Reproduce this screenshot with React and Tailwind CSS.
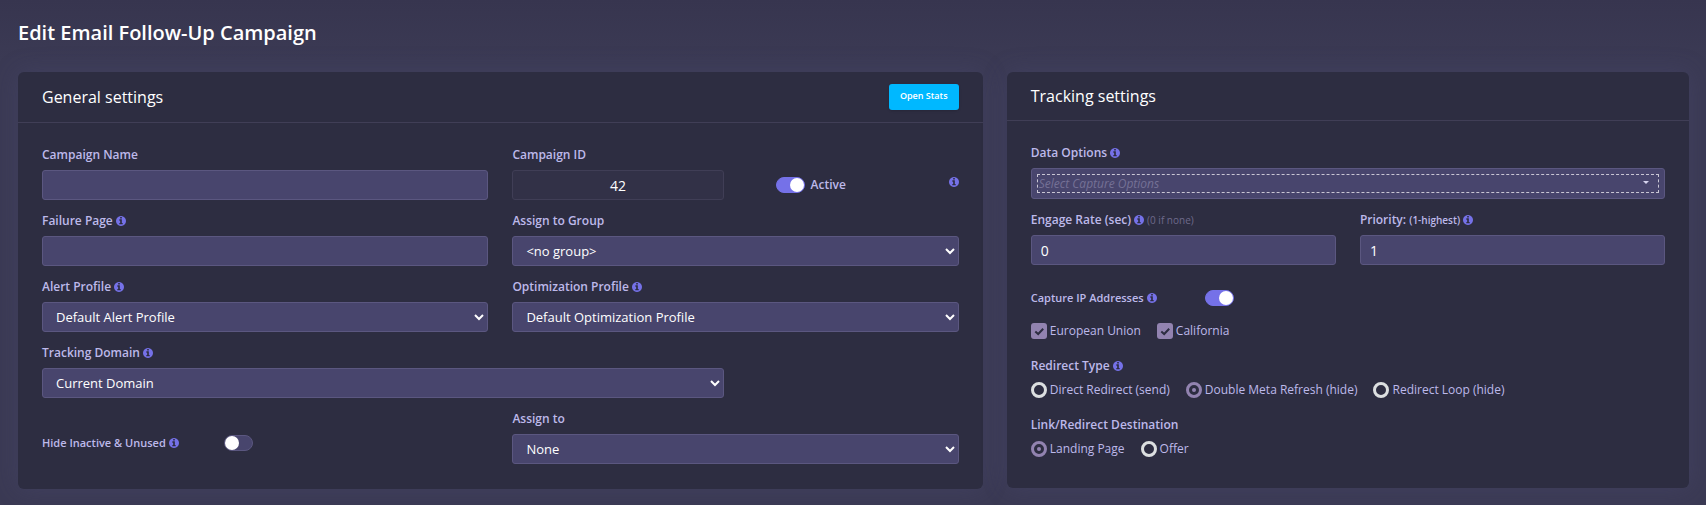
const DEFAULT_PROFILES = {
  alert: "Default Alert Profile",
  optimization: "Default Optimization Profile",
};

export default function App() {
  return (
    <div className="min-h-screen bg-[#3b3a54] bg-linear-to-b from-[#37354f] to-[#3b3a54] to-[60px] pl-[18px] pr-[17px] pb-3 font-['Open_Sans',sans-serif] text-xs text-[#bdb9ea]">
      <h1 className="pt-[17px] pb-[23px] text-xl leading-8 font-semibold text-white">Edit Email Follow-Up Campaign</h1>

      <div className="grid grid-cols-12 items-start gap-6">
        {/* General settings */}
        <Card className="col-span-7" title="General settings" action={<OpenStats />}>
          <div className="grid grid-cols-12 gap-x-6 gap-y-3 pb-[25px]">
            <Field className="col-span-6" id="name" label="Campaign Name">
              <TextInput id="name" />
            </Field>
            <Field className="col-span-3" id="cid" label="Campaign ID">
              <input
                id="cid"
                readOnly
                defaultValue="42"
                className="block h-[30px] w-full rounded-[3px] border border-[#403e56] bg-[#323147] text-center text-sm text-white outline-none"
              />
            </Field>
            <div className="col-span-3 flex items-end justify-between pl-7">
              <div className="flex h-[30px] items-center gap-[6px]">
                <Switch id="active" defaultChecked />
                <label htmlFor="active" className="leading-[18px] font-semibold">Active</label>
              </div>
              <div className="flex h-9 items-center">
                <Info />
              </div>
            </div>

            <Field className="col-span-6" id="failure" label="Failure Page" info>
              <TextInput id="failure" />
            </Field>
            <Field className="col-span-6" id="group" label="Assign to Group">
              <Select id="group" options={["<no group>"]} />
            </Field>

            <Field className="col-span-6" id="alert" label="Alert Profile" info>
              <Select id="alert" options={[DEFAULT_PROFILES.alert]} />
            </Field>
            <Field className="col-span-6" id="optimization" label="Optimization Profile" info>
              <Select id="optimization" options={[DEFAULT_PROFILES.optimization]} />
            </Field>

            <Field className="col-span-9" id="domain" label="Tracking Domain" info>
              <Select id="domain" options={["Current Domain"]} />
            </Field>

            <div className="col-span-6 flex items-center pt-3">
              <div className="flex w-[182px] items-center gap-[3px]">
                <label htmlFor="hide" className="text-[11px] leading-[18px] font-semibold">Hide Inactive &amp; Unused</label>
                <Info />
              </div>
              <Switch id="hide" />
            </div>
            <Field className="col-span-6" id="assign" label="Assign to">
              <Select id="assign" options={["None"]} />
            </Field>
          </div>
        </Card>

        {/* Tracking settings */}
        <Card className="col-span-5" title="Tracking settings">
          <div className="grid grid-cols-2 gap-x-6 gap-y-3">
            <Field className="col-span-2" id="data" label="Data Options" info>
              <CaptureSelect id="data" />
            </Field>
            <Field id="engage" label="Engage Rate (sec)" info after={<span className="text-[10px] text-[#6d6a8b]">(0 if none)</span>}>
              <TextInput id="engage" defaultValue="0" />
            </Field>
            <Field id="priority" label="Priority:" note="(1-highest)" info>
              <TextInput id="priority" defaultValue="1" />
            </Field>
          </div>

          <div className="mt-6 flex items-center">
            <div className="flex w-[174px] items-center gap-[3px]">
              <label htmlFor="capture" className="text-[11px] leading-[18px] font-semibold">Capture IP Addresses</label>
              <Info />
            </div>
            <Switch id="capture" defaultChecked />
          </div>
          <div className="mt-[15px] flex gap-4">
            <Check label="European Union" />
            <Check label="California" />
          </div>

          <RadioGroup
            title="Redirect Type"
            info
            name="redirect"
            options={["Direct Redirect (send)", "Double Meta Refresh (hide)", "Redirect Loop (hide)"]}
            selected="Double Meta Refresh (hide)"
          />
          <RadioGroup
            title="Link/Redirect Destination"
            name="destination"
            options={["Landing Page", "Offer"]}
            selected="Landing Page"
          />
          <div className="h-[30px]" />
        </Card>
      </div>
    </div>
  );
}

function Card({ className, title, action, children }) {
  return (
    <section className={`${className} rounded-md bg-[#2d2d41] shadow-[0_0_24px_rgba(80,78,124,0.3)]`}>
      <div className="flex items-center justify-between border-b border-[#403e56] px-6 py-3">
        <h2 className="text-base leading-6 text-white">{title}</h2>
        {action}
      </div>
      <div className="px-6 pt-[23px]">{children}</div>
    </section>
  );
}

function OpenStats() {
  return (
    <button className="h-[26px] w-[70px] rounded-[3px] bg-[#00b8ff] pb-[2px] text-[9px] leading-4 font-semibold text-white shadow-sm">
      Open Stats
    </button>
  );
}

function Info() {
  return (
    <svg viewBox="0 128 1536 1536" className="size-[10px] shrink-0 fill-[#7571e8]" aria-hidden="true">
      <path d="M1024 1376v-160q0-14-9-23t-23-9h-96V672q0-14-9-23t-23-9H544q-14 0-23 9t-9 23v160q0 14 9 23t23 9h96v320h-96q-14 0-23 9t-9 23v160q0 14 9 23t23 9h448q14 0 23-9t9-23zM896 480V320q0-14-9-23t-23-9H672q-14 0-23 9t-9 23v160q0 14 9 23t23 9h192q14 0 23-9t9-23zM1536 896q0 209-103 385.5T1153.5 1561 768 1664t-385.5-103T103 1281.5 0 896t103-385.5T382.5 231 768 128t385.5 103T1433 510.5 1536 896z" />
    </svg>
  );
}

function Field({ className, id, label, note, info, after, children }) {
  return (
    <div className={className}>
      <div className="mb-[6px] flex items-center gap-[3px] leading-[18px]">
        <label htmlFor={id} className="font-semibold">
          {label} {note && <span className="text-[10px]">{note}</span>}
        </label>
        {info && <Info />}
        {after}
      </div>
      {children}
    </div>
  );
}

function TextInput(props) {
  return (
    <input
      type="text"
      className="block h-[30px] w-full rounded-[3px] border border-[#5b5780] bg-[#48456d] px-[9px] text-sm text-white outline-none"
      {...props}
    />
  );
}

function Select({ id, options }) {
  return (
    <select id={id} className="block h-[30px] w-full rounded-[3px] border border-[#5b5780] bg-[#48456d] pl-[9px] text-[13px] text-white outline-none">
      {options.map((o) => (
        <option key={o}>{o}</option>
      ))}
    </select>
  );
}

function CaptureSelect({ id }) {
  return (
    <div className="relative rounded-[3px] border border-[#5b5780] bg-[#48456d] p-[5px]">
      <select id={id} className="block h-[19px] w-full appearance-none border border-dashed border-[#c9c6d4] pl-px text-xs leading-4 text-[#757196] italic outline-none">
        <option>Select Capture Options</option>
      </select>
      <svg viewBox="0 0 6 3" className="pointer-events-none absolute top-3 right-[15px] h-[3px] w-[6px] fill-[#d6d3ee]">
        <path d="M0 0h6L3 3z" />
      </svg>
    </div>
  );
}

function Switch({ id, defaultChecked }) {
  return (
    <input
      id={id}
      type="checkbox"
      role="switch"
      defaultChecked={defaultChecked}
      className="flex h-4 w-[29px] shrink-0 appearance-none items-center rounded-full border border-[#5b5780] bg-[#48456d] before:size-[14px] before:rounded-full before:bg-white checked:justify-end checked:border-[#7571e8] checked:bg-[#7571e8]"
    />
  );
}

function Check({ label }) {
  return (
    <label className="flex items-center gap-[3px] leading-[18px]">
      <span className="relative flex">
        <input type="checkbox" defaultChecked className="size-4 appearance-none rounded-[3px] bg-[#9283b0]" />
        <svg viewBox="0 0 16 16" className="pointer-events-none absolute inset-0 size-4 fill-none stroke-[#2d2d41] stroke-2">
          <path d="M4.3 8.4 7.2 11 12.2 5.8" />
        </svg>
      </span>
      {label}
    </label>
  );
}

function RadioGroup({ title, info, name, options, selected }) {
  return (
    <fieldset className="mt-[17px]">
      <legend className="mb-[6px] flex items-center gap-[3px] leading-[18px] font-semibold">
        {title} {info && <Info />}
      </legend>
      <div className="flex gap-4">
        {options.map((o) => (
          <label key={o} className="flex items-center gap-[3px] leading-[18px]">
            <input
              type="radio"
              name={name}
              defaultChecked={o === selected}
              className="flex size-4 appearance-none items-center justify-center rounded-full border-3 border-[#dcdfe0] checked:border-[#9283b0] checked:before:size-1 checked:before:rounded-full checked:before:bg-[#9283b0]"
            />
            {o}
          </label>
        ))}
      </div>
    </fieldset>
  );
}
